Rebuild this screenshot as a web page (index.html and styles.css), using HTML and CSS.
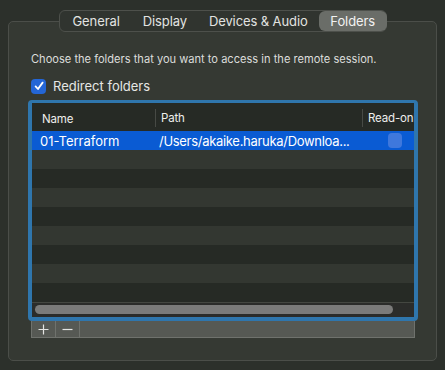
FILE: index.html
```html
<!DOCTYPE html>
<html lang="en">
<head>
    <meta charset="UTF-8">
    <title>Folders</title>
    <link rel="stylesheet" href="styles.css">
</head>
<body>
    <div class="prefs">
        <div class="tabs">
            <span class="tab">General</span>
            <span class="tab-sep"></span>
            <span class="tab">Display</span>
            <span class="tab-sep"></span>
            <span class="tab">Devices &amp; Audio</span>
            <span class="tab active">Folders</span>
        </div>
        <div class="group">
            <div class="hint">Choose the folders that you want to access in the remote session.</div>
            <label class="redirect">
                <span class="check">
                    <svg width="10" height="10" viewBox="0 0 10 10"><path d="M1.6 5.4 L4 8 L8.6 1.6" fill="none" stroke="#fff" stroke-width="1.8" stroke-linecap="round" stroke-linejoin="round"/></svg>
                </span>
                Redirect folders
            </label>
            <div class="table-frame">
                <div class="table-head">
                    <div class="col col-name">Name</div>
                    <div class="col col-path">Path</div>
                    <div class="col col-ro">Read-only</div>
                </div>
                <div class="rows">
                    <div class="row selected">
                        <div class="col col-name">01-Terraform</div>
                        <div class="col col-path">/Users/akaike.haruka/Downloa...</div>
                        <div class="col col-ro"><span class="ro-box"></span></div>
                    </div>
                    <div class="row"></div>
                    <div class="row"></div>
                    <div class="row"></div>
                    <div class="row"></div>
                    <div class="row"></div>
                    <div class="row"></div>
                    <div class="row"></div>
                    <div class="row"></div>
                </div>
                <div class="hscroll"><div class="thumb"></div></div>
            </div>
            <div class="toolbar">
                <span class="tool" title="Add">
                    <svg width="11" height="11" viewBox="0 0 11 11"><path d="M5.5 0.5 V10.5 M0.5 5.5 H10.5" stroke="#e4e5e3" stroke-width="1.2"/></svg>
                </span>
                <span class="tool" title="Remove">
                    <svg width="11" height="11" viewBox="0 0 11 11"><path d="M0.5 5.5 H10.5" stroke="#e4e5e3" stroke-width="1.2"/></svg>
                </span>
            </div>
        </div>
    </div>
</body>
</html>
```

FILE: styles.css
```css
body {
    margin: 0;
    background: #2c302b;
    font-family: 'Inter', 'Liberation Sans', sans-serif;
    color: #e4e5e3;
    width: 445px;
    height: 370px;
    overflow: hidden;
}
.prefs {
    padding-top: 10px;
}
.tabs {
    position: relative;
    z-index: 1;
    display: flex;
    align-items: center;
    width: 326px;
    height: 20px;
    margin: 0 auto -11px auto;
    background: #30342f;
    border: 1px solid #4d504b;
    border-radius: 6px;
    font-size: 13px;
    letter-spacing: -0.1px;
}
.tab {
    flex: none;
    padding: 0 11px;
    line-height: 20px;
    color: #e2e3e1;
}
.tab:first-child {
    padding-left: 13px;
    padding-right: 12px;
}
.tab-sep {
    width: 1px;
    height: 12px;
    background: #4a4d48;
}
.tab.active {
    margin-left: auto;
    width: 68px;
    padding: 0;
    text-align: center;
    background: #6a6d68;
    border-radius: 6px;
    color: #f2f2f2;
}
.group {
    margin: 0 8px;
    background: #353933;
    border: 1px solid #4b4e49;
    border-radius: 5px;
    box-sizing: border-box;
    height: 340px;
    padding: 30px 0 0 22px;
}
.hint {
    font-size: 11.1px;
    color: #dcdddb;
    line-height: 14px;
}
.redirect {
    display: flex;
    align-items: center;
    gap: 7px;
    margin-top: 12px;
    font-size: 13px;
    color: #e6e7e5;
    height: 16px;
}
.check {
    width: 15px;
    height: 15px;
    border-radius: 4px;
    background: #2466d6;
    display: flex;
    align-items: center;
    justify-content: center;
}
.table-frame {
    margin: 6px 0 0 -3px;
    width: 390px;
    box-sizing: border-box;
    border: 4px solid #2f76ad;
    border-top-width: 3px;
    border-radius: 4px;
    background: #262a25;
    overflow: hidden;
}
.table-head {
    display: flex;
    height: 28px;
    background: #262a25;
    font-size: 11.5px;
    letter-spacing: -0.15px;
    color: #eeeeec;
}
.table-head .col {
    display: flex;
    align-items: center;
    padding-top: 4px;
}
.table-head .col-name {
    padding-left: 10px;
}
.table-head .col-path,
.table-head .col-ro {
    border-left: 1px solid #474a45;
    margin: 6px 0 4px 0;
    padding-top: 0;
    padding-left: 5px;
}
.col {
    flex: none;
    white-space: nowrap;
    overflow: hidden;
    box-sizing: border-box;
}
.col-name {
    width: 123px;
    padding-left: 8px;
}
.col-path {
    width: 207px;
    padding-left: 4px;
}
.col-ro {
    width: 52px;
}
.row {
    display: flex;
    align-items: center;
    height: 19px;
    font-size: 13px;
    background: #262a25;
}
.row:nth-child(even) {
    background: #333731;
}
.row.selected {
    background: #0a5bd3;
    color: #ffffff;
}
.row.selected .col-path {
    letter-spacing: -0.3px;
}
.row .col-ro {
    padding-left: 26px;
    display: flex;
}
.ro-box {
    width: 14px;
    height: 15px;
    border-radius: 4px;
    background: #3f78dc;
}
.hscroll {
    height: 15px;
    background: #2b2c2a;
    border-top: 1px solid #444741;
    box-sizing: border-box;
    padding: 2px 0 0 3px;
}
.thumb {
    width: 358px;
    height: 9px;
    border-radius: 5px;
    background: #7b7b7a;
}
.toolbar {
    display: flex;
    width: 384px;
    height: 17px;
    box-sizing: border-box;
    background: #565954;
    border: 1px solid #6f726d;
    border-top: none;
}
.tool {
    width: 23px;
    display: flex;
    align-items: center;
    justify-content: center;
    border-right: 1px solid #6f726d;
}
```
